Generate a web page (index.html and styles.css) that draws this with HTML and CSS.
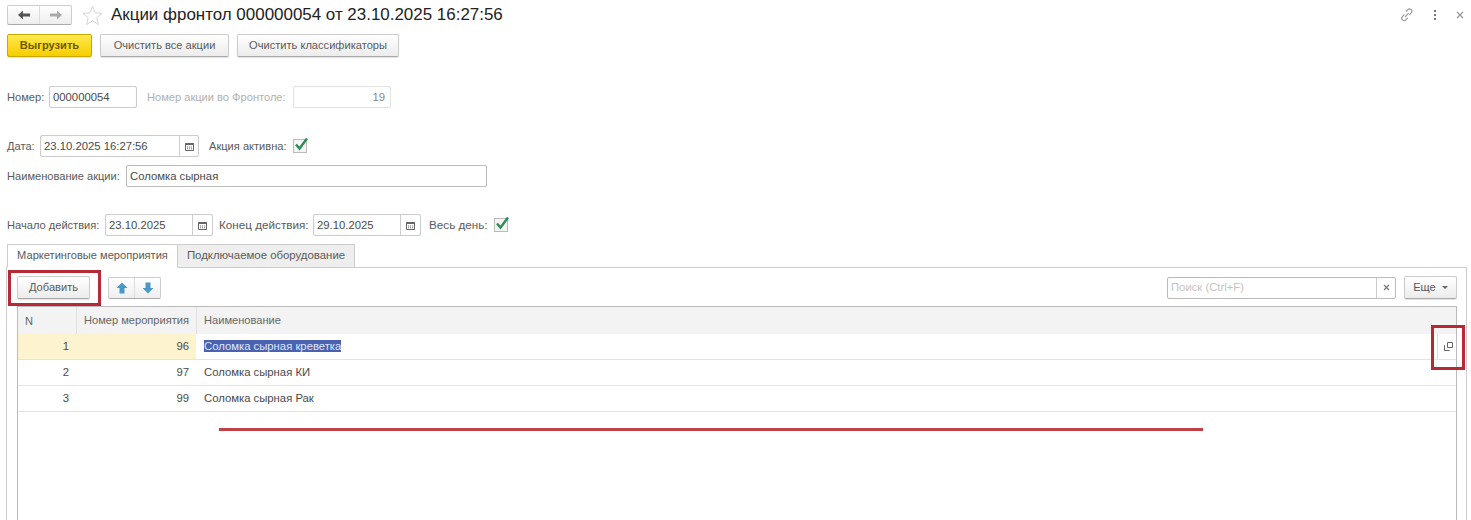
FILE: index.html
```html
<!DOCTYPE html>
<html>
<head>
    <title>Акции фронтол</title>
    <link rel="stylesheet" href="styles.css">
</head>
<body>
    <div class="page">
        <div class="title-row">
            <div class="nav-group">
                <span class="nav-btn">
                    <svg width="14" height="10" viewBox="0 0 14 10"><path d="M1 5l5-4.5v3h7v3H6v3z" fill="#555"/></svg>
                </span>
                <span class="nav-btn">
                    <svg width="14" height="10" viewBox="0 0 14 10"><path d="M13 5L8 .5v3H1v3h7v3z" fill="#aaa"/></svg>
                </span>
            </div>
            <svg class="star" width="21" height="21" viewBox="0 0 21 21"><path d="M10.5 1.5l2.7 6.3 6.8.6-5.2 4.4 1.6 6.7-5.9-3.6-5.9 3.6 1.6-6.7L1 8.4l6.8-.6z" fill="#fff" stroke="#d4d4d4"/></svg>
            <h1 class="title">Акции фронтол 000000054 от 23.10.2025 16:27:56</h1>
            <div class="window-icons">
                <svg width="14" height="14" viewBox="0 0 14 14" fill="none" stroke="#999" stroke-width="1.2"><path d="M6 3.5l1.8-1.8a2.3 2.3 0 0 1 3.4 3.2L9.4 6.8M7.6 10l-1.8 1.8a2.3 2.3 0 0 1-3.4-3.2l1.8-1.9M5 8.8l3.6-3.6"/></svg>
                <svg width="4" height="12" viewBox="0 0 4 12" fill="#777"><rect x="1" y="1" width="2" height="2"/><rect x="1" y="5" width="2" height="2"/><rect x="1" y="9" width="2" height="2"/></svg>
                <svg width="8" height="8" viewBox="0 0 8 8" stroke="#999" stroke-width="1.3"><path d="M1 1l6 6M7 1L1 7"/></svg>
            </div>
        </div>

        <div class="actions">
            <button class="btn btn-primary">Выгрузить</button>
            <button class="btn btn-clear-all">Очистить все акции</button>
            <button class="btn btn-clear-class">Очистить классификаторы</button>
        </div>

        <div class="form-row row-number">
            <label class="label-number">Номер:</label>
            <span class="field w-number">000000054</span>
            <label class="muted label-front">Номер акции во Фронтоле:</label>
            <span class="field w-front disabled">19</span>
        </div>

        <div class="form-row row-date">
            <label class="label-date">Дата:</label>
            <span class="field w-date has-btn">
                <span class="field-text">23.10.2025 16:27:56</span>
                <span class="field-btn">
                    <svg width="9" height="9" viewBox="0 0 9 9"><path d="M.5 1.5h8v7h-8z" fill="#fff" stroke="#666"/><path d="M.5 1h8v2h-8z" fill="#666"/><path d="M2 4.5h1v1H2zM4 4.5h1v1H4zM6 4.5h1v1H6zM2 6.3h1v1H2zM4 6.3h1v1H4zM6 6.3h1v1H6z" fill="#777"/></svg>
                </span>
            </span>
            <label class="label-active">Акция активна:</label>
            <span class="check">
                <svg width="16" height="16" viewBox="0 0 16 16"><path d="M3 7.5l3.5 4L14 1.5" fill="none" stroke="#2e8b57" stroke-width="2.4"/></svg>
            </span>
        </div>

        <div class="form-row row-name">
            <label class="label-name">Наименование акции:</label>
            <span class="field w-name">Соломка сырная</span>
        </div>

        <div class="form-row row-period">
            <label class="label-start">Начало действия:</label>
            <span class="field w-period has-btn">
                <span class="field-text">23.10.2025</span>
                <span class="field-btn">
                    <svg width="9" height="9" viewBox="0 0 9 9"><path d="M.5 1.5h8v7h-8z" fill="#fff" stroke="#666"/><path d="M.5 1h8v2h-8z" fill="#666"/><path d="M2 4.5h1v1H2zM4 4.5h1v1H4zM6 4.5h1v1H6zM2 6.3h1v1H2zM4 6.3h1v1H4zM6 6.3h1v1H6z" fill="#777"/></svg>
                </span>
            </span>
            <label class="label-end">Конец действия:</label>
            <span class="field w-period has-btn">
                <span class="field-text">29.10.2025</span>
                <span class="field-btn">
                    <svg width="9" height="9" viewBox="0 0 9 9"><path d="M.5 1.5h8v7h-8z" fill="#fff" stroke="#666"/><path d="M.5 1h8v2h-8z" fill="#666"/><path d="M2 4.5h1v1H2zM4 4.5h1v1H4zM6 4.5h1v1H6zM2 6.3h1v1H2zM4 6.3h1v1H4zM6 6.3h1v1H6z" fill="#777"/></svg>
                </span>
            </span>
            <label class="label-day">Весь день:</label>
            <span class="check">
                <svg width="16" height="16" viewBox="0 0 16 16"><path d="M3 7.5l3.5 4L14 1.5" fill="none" stroke="#2e8b57" stroke-width="2.4"/></svg>
            </span>
        </div>

        <div class="tabs">
            <span class="tab tab-active">Маркетинговые мероприятия</span>
            <span class="tab">Подключаемое оборудование</span>
        </div>

        <div class="panel">
            <div class="panel-bar">
                <button class="btn btn-add">Добавить</button>
                <div class="nav-group arrows">
                    <span class="nav-btn">
                        <svg width="12" height="12" viewBox="0 0 12 12"><path d="M6 .5L11.5 6H8.5v5.5h-5V6H.5z" fill="#4a98c4"/></svg>
                    </span>
                    <span class="nav-btn">
                        <svg width="12" height="12" viewBox="0 0 12 12"><path d="M6 11.5L11.5 6H8.5V.5h-5V6H.5z" fill="#4a98c4"/></svg>
                    </span>
                </div>
                <span class="field search has-btn">
                    <span class="field-text placeholder">Поиск (Ctrl+F)</span>
                    <span class="field-btn search-clear">
                        <svg width="7" height="7" viewBox="0 0 7 7" stroke="#777" stroke-width="1.2"><path d="M1 1l5 5M6 1L1 6"/></svg>
                    </span>
                </span>
                <button class="btn btn-more">Еще <i class="caret"></i></button>
            </div>

            <div class="grid">
                <div class="grid-row grid-head">
                    <span class="col-n">N</span>
                    <span class="col-num">Номер мероприятия</span>
                    <span class="col-name">Наименование</span>
                </div>
                <div class="grid-row selected">
                    <span class="col-n">1</span>
                    <span class="col-num">96</span>
                    <span class="col-name"><span class="hl">Соломка сырная креветка</span></span>
                    <span class="open-btn">
                        <svg width="9" height="9" viewBox="0 0 9 9" fill="none" stroke="#666"><path d="M3.5.5h5v5h-5zM1 3.5H.5v5h5V8"/></svg>
                    </span>
                </div>
                <div class="grid-row">
                    <span class="col-n">2</span>
                    <span class="col-num">97</span>
                    <span class="col-name">Соломка сырная КИ</span>
                </div>
                <div class="grid-row">
                    <span class="col-n">3</span>
                    <span class="col-num">99</span>
                    <span class="col-name">Соломка сырная Рак</span>
                </div>
            </div>
        </div>
    </div>

    <!-- red marks drawn over the screenshot -->
    <div class="mark mark-add"></div>
    <div class="mark mark-open"></div>
    <div class="mark-line"></div>
</body>
</html>
```

FILE: styles.css
```css
html, body {
    height: 100%;
}

body {
    font-family: "Liberation Sans", Arial, sans-serif;
    font-size: 11.1px;
    color: #5a5a5a;
    background-color: #fff;
    margin: 0;
    overflow: hidden;
    position: relative;
}

.page {
    padding: 5px 4px 0 7px;
}

/* title row */

.title-row {
    display: flex;
    align-items: center;
    height: 20px;
}

.nav-group {
    display: flex;
    width: 65px;
    height: 20px;
    border: 1px solid #ccc;
    border-bottom-color: #aaa;
    border-radius: 2px;
    box-sizing: border-box;
    background: linear-gradient(#fff, #eee);
}

.nav-btn {
    flex: 1;
    display: flex;
    align-items: center;
    justify-content: center;
}

.nav-btn + .nav-btn {
    border-left: 1px solid #ddd;
}

.star {
    margin-left: 10px;
}

.title {
    margin: 0 0 0 8px;
    font-size: 16.95px;
    font-weight: normal;
    color: #222;
}

.window-icons {
    margin-left: auto;
    margin-right: 3px;
    display: flex;
    align-items: center;
    gap: 19px;
}

/* buttons */

.btn {
    font-family: inherit;
    font-size: 11.1px;
    color: #5a5a5a;
    height: 23px;
    padding: 0 0 2px;
    border: 1px solid #ccc;
    border-bottom-color: #aaa;
    border-radius: 2px;
    background: linear-gradient(#fff, #ececec);
    box-shadow: 0 1px 1px rgba(0, 0, 0, 0.12);
}

.actions {
    display: flex;
    gap: 8px;
    margin-top: 9px;
}

.btn-primary {
    width: 85px;
    color: #6b5800;
    font-weight: bold;
    border-color: #c9a800;
    background: linear-gradient(#ffe94d, #f6cd00);
}

.btn-clear-all {
    width: 129px;
}

.btn-clear-class {
    width: 162px;
}

/* form */

.form-row {
    display: flex;
    align-items: center;
    height: 22px;
}

.form-row label {
    padding-bottom: 1px;
    white-space: nowrap;
}

.row-number {
    margin-top: 29px;
}

.row-date {
    margin-top: 27px;
}

.row-name {
    margin-top: 8px;
}

.row-period {
    margin-top: 27px;
}

.field {
    display: flex;
    align-items: center;
    box-sizing: border-box;
    height: 22px;
    padding: 0 3px 1px;
    border: 1px solid #ccc;
    border-radius: 2px;
    background-color: #fff;
    color: #4a4a4a;
    font-size: 11.3px;
    box-shadow: inset 0 0 1px rgba(0, 0, 0, 0.1);
}

.has-btn {
    padding: 0 0 0 3px;
}

.field-text {
    flex: 1;
    padding-bottom: 1px;
}

.field-btn {
    width: 18px;
    align-self: stretch;
    display: flex;
    align-items: center;
    justify-content: center;
    border-left: 1px solid #ccc;
}

.label-number {
    width: 42px;
}

.w-number {
    width: 88px;
}

.label-front {
    width: 146px;
    margin-left: 10px;
}

.w-front {
    width: 98px;
    justify-content: flex-end;
    padding-right: 5px;
    color: #888;
    border-color: #e2e2e2;
}

.muted {
    color: #b0b0b0;
}

.label-date {
    width: 33px;
}

.w-date {
    width: 159px;
}

.label-active {
    width: 84px;
    margin-left: 10px;
}

.check {
    width: 14px;
    height: 14px;
    box-sizing: border-box;
    border: 1px solid #bbb;
    background-color: #f4f4f4;
    position: relative;
}

.check svg {
    position: absolute;
    left: -1px;
    top: -3px;
}

.label-name {
    width: 119px;
}

.w-name {
    width: 361px;
    border-color: #bbb;
}

.label-start {
    width: 98px;
}

.w-period {
    width: 108px;
}

.w-period .field-btn {
    width: 19px;
}

.form-row .label-end {
    width: 94px;
    margin-left: 6px;
    font-size: 11.7px;
}

.form-row .label-day {
    width: 65px;
    margin-left: 8px;
    font-size: 11.7px;
}

/* tabs */

.tabs {
    display: flex;
    margin-top: 8px;
    height: 24px;
    position: relative;
    z-index: 1;
}

.tab {
    display: flex;
    align-items: center;
    justify-content: center;
    box-sizing: border-box;
    height: 24px;
    width: 177px;
    padding-bottom: 2px;
    font-size: 11.4px;
    color: #5a5a5a;
    background-color: #eee;
    border: 1px solid #ccc;
    border-left: none;
    border-bottom: 1px solid #ccc;
}

.tab-active {
    width: 171px;
    font-size: 11.1px;
    background-color: #fff;
    border-left: 1px solid #ccc;
    border-bottom-color: #fff;
}

.panel {
    height: 260px;
    margin-top: -1px;
    margin-left: -1px;
    padding: 8px 9px 0 10px;
    border: 1px solid #ccc;
    border-bottom: none;
}

.panel-bar {
    display: flex;
    align-items: center;
    height: 23px;
}

.btn-add {
    width: 73px;
}

.arrows {
    width: 53px;
    height: 22px;
    margin-left: 18px;
}

.search {
    width: 229px;
    margin-left: auto;
    border-color: #bbb;
}

.placeholder {
    color: #c4c4c4;
}

.btn-more {
    width: 53px;
    margin-left: 8px;
}

.caret {
    display: inline-block;
    margin-left: 3px;
    vertical-align: 2px;
    border-left: 3px solid transparent;
    border-right: 3px solid transparent;
    border-top: 3px solid #666;
}

/* table */

.grid {
    margin-top: 7px;
    height: 230px;
    border: 1px solid #bbb;
    border-bottom: none;
}

.grid-row {
    display: flex;
    align-items: center;
    height: 23px;
    padding-bottom: 2px;
    border-bottom: 1px solid #e4e4e4;
    position: relative;
    color: #4a4a4a;
    font-size: 11.3px;
}

.grid-head {
    height: 27px;
    padding-bottom: 0;
    background-color: #f3f3f3;
    border-bottom: none;
    color: #666;
    font-size: 11.1px;
}

.col-n {
    box-sizing: border-box;
    width: 58px;
    padding: 0 7px;
    text-align: right;
}

.grid-head .col-n {
    text-align: left;
}

.col-num {
    box-sizing: border-box;
    width: 120px;
    padding: 0 7px;
    text-align: right;
    white-space: nowrap;
}

.grid-head .col-num,
.grid-head .col-name {
    align-self: stretch;
    display: flex;
    align-items: center;
    border-left: 1px solid #e0e0e0;
    padding-bottom: 2px;
}

.col-name {
    padding: 0 8px;
}

.grid-head .col-name {
    padding-left: 7px;
}

.selected {
    align-items: stretch;
    height: 25px;
    padding-bottom: 0;
}

.selected .col-n,
.selected .col-num {
    line-height: 24px;
    background-color: #fdf3cf;
}

.selected .col-name {
    line-height: 24px;
}

.hl {
    background-color: #4a62b0;
    color: #dfe6ff;
}

.open-btn {
    position: absolute;
    right: 0;
    top: 0;
    bottom: 0;
    box-sizing: border-box;
    width: 19px;
    padding-left: 2px;
    display: flex;
    align-items: center;
    justify-content: center;
    border-left: 1px solid #ddd;
}

/* red marks */

.mark {
    position: absolute;
    box-sizing: border-box;
    border: 3px solid #b72a35;
}

.mark-add {
    left: 8px;
    top: 270px;
    width: 93px;
    height: 36px;
}

.mark-open {
    left: 1431px;
    top: 325px;
    width: 34px;
    height: 45px;
}

.mark-line {
    position: absolute;
    left: 219px;
    top: 428px;
    width: 984px;
    height: 3px;
    background-color: #c04048;
}
```
